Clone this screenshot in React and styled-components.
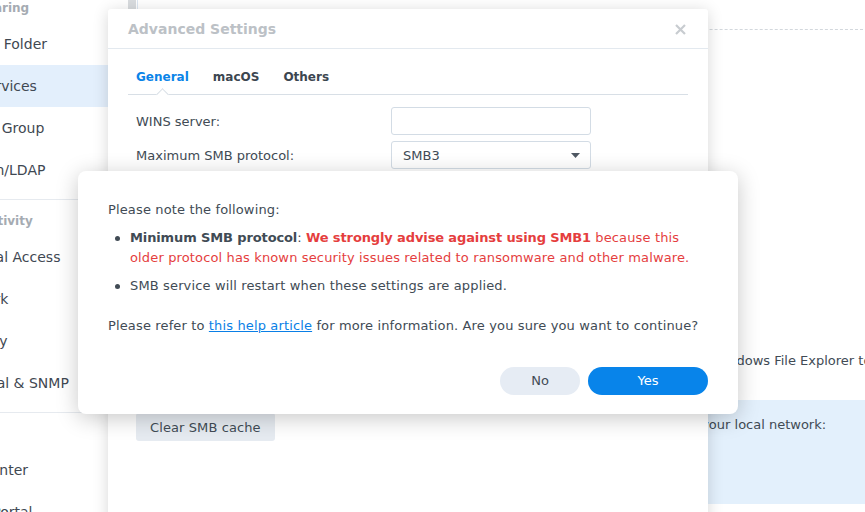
import React from "react";
import styled, { createGlobalStyle } from "styled-components";

const GlobalStyle = createGlobalStyle`
  html, body {
    margin: 0;
    padding: 0;
    background: #ffffff;
    overflow: hidden;
  }
  body {
    font-family: "DejaVu Sans", Verdana, sans-serif;
    color: #414b55;
  }
`;

const navGroups = [
  {
    title: "File Sharing",
    first: true,
    items: ["Shared Folder", "File Services", "User & Group", "Domain/LDAP"],
    active: "File Services",
  },
  {
    title: "Connectivity",
    items: ["External Access", "Network", "Security", "Terminal & SNMP"],
  },
  {
    title: "",
    items: ["Info Center", "Login Portal"],
  },
];

const hiddenRows = [
  "Minimum SMB protocol:",
  "Transport encryption mode:",
  "Server signing:",
  "Enable Opportunistic Locking",
  "Enable SMB durable handles",
  "Enable SMB2 lease",
  "Enable local master browser",
];

const CloseIcon = () => (
  <svg width="11" height="11" viewBox="0 0 11 11">
    <path d="M1 1 L10 10 M10 1 L1 10" stroke="#c8ccd0" strokeWidth="2.2" />
  </svg>
);

const Caret = () => (
  <svg width="9" height="5" viewBox="0 0 9 5">
    <path d="M0 0 H9 L4.5 5 Z" fill="#4f5863" />
  </svg>
);

const App = () => {
  return (
    <>
      <GlobalStyle />
      <Page>
        <Sidebar>
          <Nav>
            {navGroups.map((g, i) => (
              <Group key={i}>
                <GroupTitle $first={g.first}>{g.title}</GroupTitle>
                {g.items.map((item) => (
                  <NavItem key={item} $active={item === g.active}>
                    {item}
                  </NavItem>
                ))}
              </Group>
            ))}
          </Nav>
          <Track>
            <Thumb />
          </Track>
        </Sidebar>

        <Main>
          <MainHeader />
          <Para>Windows File Explorer to discover this server via WS-Discovery</Para>
          <InfoBox>Allow access from your local network:</InfoBox>
        </Main>

        <Dialog>
          <DialogHeader>
            <DialogTitle>Advanced Settings</DialogTitle>
            <CloseIcon />
          </DialogHeader>
          <DialogBody>
            <TabBar>
              <Tab $active>General</Tab>
              <Tab>macOS</Tab>
              <Tab>Others</Tab>
            </TabBar>
            <Form>
              <FormRow>
                <Label>WINS server:</Label>
                <Input />
              </FormRow>
              <FormRow>
                <Label>Maximum SMB protocol:</Label>
                <Select>
                  <span>SMB3</span>
                  <Caret />
                </Select>
              </FormRow>
              {hiddenRows.map((r) => (
                <FormRow key={r}>
                  <Label>{r}</Label>
                </FormRow>
              ))}
              <FormRow>
                <GreyButton>Clear SMB cache</GreyButton>
              </FormRow>
            </Form>
          </DialogBody>
        </Dialog>

        <Modal>
          <Text>Please note the following:</Text>
          <List>
            <Bullet>
              <strong>Minimum SMB protocol</strong>:{" "}
              <Warn>
                <strong>We strongly advise against using SMB1</strong> because
                this older protocol has known security issues related to
                ransomware and other malware.
              </Warn>
            </Bullet>
            <Bullet>SMB service will restart when these settings are applied.</Bullet>
          </List>
          <Text $spaced>
            Please refer to <Link href="#">this help article</Link> for more
            information. Are you sure you want to continue?
          </Text>
          <Actions>
            <PillButton>No</PillButton>
            <PillButton $primary>Yes</PillButton>
          </Actions>
        </Modal>
      </Page>
    </>
  );
};

export default App;

const Page = styled.div`
  position: relative;
  width: 865px;
  height: 512px;
  overflow: hidden;
  display: flex;
`;

const Sidebar = styled.div`
  flex: none;
  box-sizing: border-box;
  width: 198px;
  margin-left: -60px;
  height: 100%;
  display: flex;
  border-right: 1px solid #dde7f2;
  background: #ffffff;
`;

const Nav = styled.div`
  flex: 1;
  display: flex;
  flex-direction: column;
`;

const Group = styled.div`
  padding-bottom: 8px;
  border-bottom: 1px solid #e6eaef;
`;

const GroupTitle = styled.div`
  padding: ${(p) => (p.$first ? "1px" : "14px")} 8px 8px;
  line-height: 14px;
  height: 14px;
  font-size: 12px;
  font-weight: bold;
  color: #a5abb2;
  white-space: nowrap;
`;

const NavItem = styled.div`
  height: 42px;
  line-height: 43px;
  padding-left: 10px;
  font-size: 14px;
  color: #3f4852;
  white-space: nowrap;
  background: ${(p) => (p.$active ? "#e3effc" : "transparent")};
`;

const Track = styled.div`
  flex: none;
  width: 9px;
`;

const Thumb = styled.div`
  width: 8px;
  height: 180px;
  background: #d9dcdf;
`;

const Main = styled.div`
  flex: 1;
  min-width: 0;
  display: flex;
  flex-direction: column;
  padding: 0 2px 0 20px;
`;

const MainHeader = styled.div`
  flex: none;
  height: 29px;
  border-bottom: 1px dashed #d3d8dd;
`;

const Para = styled.div`
  margin: 321px 0 0 554px;
  font-size: 13px;
  line-height: 20px;
  white-space: nowrap;
`;

const InfoBox = styled.div`
  margin: 29px -2px 0 412px;
  height: 104px;
  box-sizing: border-box;
  padding: 15px 10px;
  background: #e3f0fc;
  font-size: 13px;
  line-height: 20px;
  white-space: nowrap;
`;

const Dialog = styled.div`
  position: absolute;
  left: 108px;
  top: 9px;
  width: 600px;
  height: 520px;
  background: #ffffff;
  border-radius: 3px 3px 0 0;
  box-shadow: 0 2px 16px rgba(0, 0, 0, 0.16);
`;

const DialogHeader = styled.div`
  height: 40px;
  padding: 1px 22px 0 20px;
  box-sizing: border-box;
  display: flex;
  align-items: center;
  justify-content: space-between;
  border-bottom: 1px solid #e3e9ef;
`;

const DialogTitle = styled.div`
  font-size: 14px;
  font-weight: bold;
  color: #bcc1c6;
`;

const DialogBody = styled.div`
  padding: 0 20px;
`;

const TabBar = styled.div`
  display: flex;
  gap: 8px;
  padding-top: 18px;
  padding-bottom: 7px;
  border-bottom: 1px solid #d8dfe6;
`;

const Tab = styled.div`
  position: relative;
  padding: 0 8px;
  line-height: 20px;
  font-size: 12px;
  font-weight: bold;
  color: ${(p) => (p.$active ? "#0a84e8" : "#3c4650")};

  &::after {
    content: "";
    display: ${(p) => (p.$active ? "block" : "none")};
    position: absolute;
    left: 50%;
    bottom: -12px;
    width: 8px;
    height: 8px;
    margin-left: -4px;
    background: #ffffff;
    border-left: 1px solid #d8dfe6;
    border-top: 1px solid #d8dfe6;
    transform: rotate(45deg);
  }
`;

const Form = styled.div`
  display: flex;
  flex-direction: column;
  gap: 6px;
  padding: 12px 0 0 8px;
`;

const FormRow = styled.div`
  display: flex;
  align-items: center;
  height: 28px;
`;

const Label = styled.div`
  width: 255px;
  flex: none;
  font-size: 13px;
  white-space: nowrap;
`;

const Input = styled.div`
  box-sizing: border-box;
  width: 200px;
  height: 28px;
  border: 1px solid #d3dce5;
  border-radius: 3px;
`;

const Select = styled(Input)`
  display: flex;
  align-items: center;
  justify-content: space-between;
  padding: 0 10px 0 11px;
  font-size: 13px;
`;

const GreyButton = styled.div`
  height: 28px;
  line-height: 29px;
  padding: 0 14px;
  border-radius: 3px;
  background: #e6ebf1;
  font-size: 13px;
  letter-spacing: 0.1px;
  color: #414b55;
`;

const Modal = styled.div`
  position: absolute;
  left: 78px;
  top: 171px;
  width: 660px;
  height: 243px;
  box-sizing: border-box;
  padding: 29px 30px 19px;
  display: flex;
  flex-direction: column;
  background: #ffffff;
  border-radius: 8px;
  box-shadow: 0 4px 22px rgba(0, 0, 0, 0.22);
  font-size: 13px;
  line-height: 20px;
  letter-spacing: 0.14px;
`;

const Text = styled.div`
  margin-top: ${(p) => (p.$spaced ? "20px" : "0")};
`;

const List = styled.ul`
  margin: 8px 0 0;
  padding: 0;
  list-style: none;
  display: flex;
  flex-direction: column;
  gap: 8px;
`;

const Bullet = styled.li`
  position: relative;
  padding-left: 22px;

  &::before {
    content: "";
    position: absolute;
    left: 7px;
    top: 8px;
    width: 5px;
    height: 5px;
    border-radius: 50%;
    background: #414b55;
  }

  strong {
    font-weight: bold;
    letter-spacing: -0.12px;
  }
`;

const Warn = styled.span`
  color: #e53e3e;
`;

const Link = styled.a`
  color: #0a7fe6;
  text-decoration: underline;
`;

const Actions = styled.div`
  margin-top: auto;
  display: flex;
  justify-content: flex-end;
  gap: 8px;
  letter-spacing: 0;
`;

const PillButton = styled.div`
  width: ${(p) => (p.$primary ? "120px" : "80px")};
  height: 28px;
  line-height: 28px;
  text-align: center;
  border-radius: 14px;
  font-size: 13px;
  background: ${(p) => (p.$primary ? "#0884ea" : "#e6ecf4")};
  color: ${(p) => (p.$primary ? "#ffffff" : "#414b55")};
`;
